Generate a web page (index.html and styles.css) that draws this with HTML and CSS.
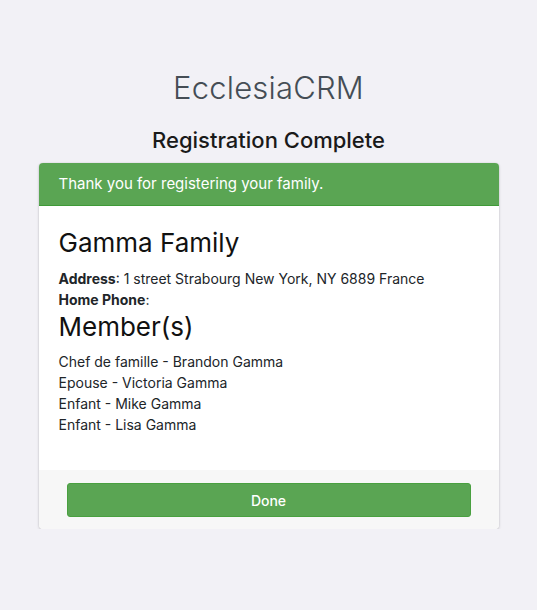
FILE: index.html
```html
<!DOCTYPE html>
<html>
<head>
<meta charset="utf-8">
<link rel="stylesheet" href="styles.css">
</head>
<body>
<div class="page">
  <div class="logo">Ecclesia<span class="logo-b">CRM</span></div>
  <h2 class="title">Registration Complete</h2>
  <div class="card">
    <div class="card-header">Thank you for registering your family.</div>
    <div class="card-body">
      <h3 class="family">Gamma Family</h3>
      <div class="line"><b>Address</b>: 1 street Strabourg New York, NY 6889 France</div>
      <div class="line"><b>Home Phone</b>:</div>
      <h3 class="members">Member(s)</h3>
      <div class="line">Chef de famille - Brandon Gamma</div>
      <div class="line">Epouse - Victoria Gamma</div>
      <div class="line">Enfant - Mike Gamma</div>
      <div class="line">Enfant - Lisa Gamma</div>
    </div>
    <div class="card-footer">
      <button class="btn">Done</button>
    </div>
  </div>
</div>
</body>
</html>
```
FILE: styles.css
```css
html, body {
  margin: 0;
  padding: 0;
  background: #f2f1f6;
}
body {
  font-family: Inter, "Noto Sans", sans-serif;
  color: #212529;
}
.page {
  width: 460px;
  margin: 0 auto;
  padding-top: 66px;
}
.logo {
  text-align: center;
  font-size: 31px;
  font-weight: 300;
  color: #454d55;
  line-height: 44px;
  letter-spacing: 0.2px;
}
.title {
  text-align: center;
  font-size: 22px;
  font-weight: 500;
  margin: 15px 0 8px;
  line-height: 30px;
  color: #1a1a1a;
}
.card {
  background: #fff;
  border-radius: 4px;
  box-shadow: 0 0 1px rgba(0,0,0,.2), 0 1px 3px rgba(0,0,0,.18);
  overflow: hidden;
}
.card-header {
  background: #5aa553;
  color: #fff;
  font-size: 15px;
  padding: 0 20px;
  height: 42px;
  line-height: 42px;
  border-bottom: 1px solid #3f9a38;
}
.card-body {
  padding: 20px 20px 35px;
  font-size: 14px;
}
.family, .members {
  font-size: 26px;
  font-weight: 400;
  margin: 0;
  line-height: 34px;
  color: #111;
}
.family { margin-bottom: 8px; }
.line {
  line-height: 21px;
}
.members { margin-bottom: 7px; }
.card-footer {
  background: #f7f7f7;
  padding: 13px 28px 12px;
}
.btn {
  display: block;
  width: 100%;
  height: 34px;
  background: #5aa553;
  border: 1px solid #49a040;
  border-radius: 3px;
  color: #fff;
  font-family: inherit;
  font-size: 14px;
  font-weight: 500;
}
```
